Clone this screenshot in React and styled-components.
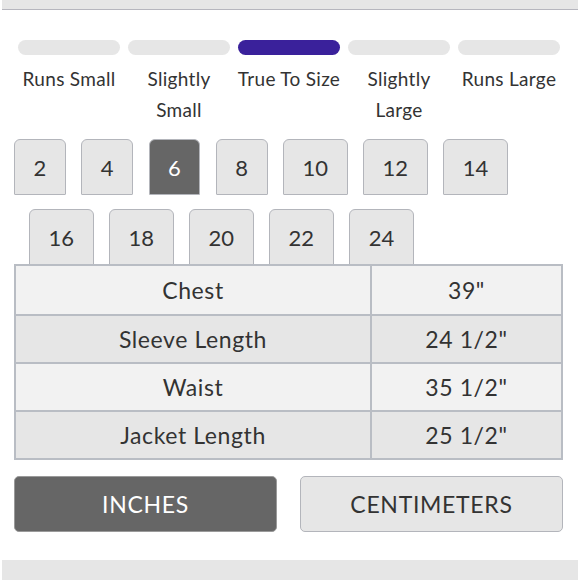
import React from "react";
import styled, { createGlobalStyle } from "styled-components";

const Global = createGlobalStyle`
  html, body { margin: 0; padding: 0; background: #fff; }
  body { font-family: Lato, "Open Sans", sans-serif; color: #333; }
`;

const Page = styled.div`
  width: 580px;
  height: 580px;
  display: flex;
  flex-direction: column;
  overflow: hidden;
`;

const Strip = styled.div`
  margin: 0 2px;
  height: ${(p) => p.$h}px;
  background: #e6e6e6;
  border-bottom: ${(p) => (p.$line ? "1.5px solid #b6b6be" : "none")};
  flex-shrink: 0;
`;

const Body = styled.div`
  padding: 0 17px 0 14px;
  flex: 1;
  display: flex;
  flex-direction: column;
`;

const Fit = styled.div`
  display: grid;
  grid-template-columns: repeat(5, 102px);
  column-gap: 8px;
  margin: 30px 0 0 4px;
`;

const FitItem = styled.div`
  display: flex;
  flex-direction: column;
  align-items: center;
  gap: 8px;
`;

const Bar = styled.div`
  width: 102px;
  height: 15px;
  border-radius: 8px;
  background: ${(p) => (p.$on ? "#3a219b" : "#e6e6e6")};
`;

const FitLabel = styled.div`
  font-size: 19px;
  letter-spacing: 0.3px;
  line-height: 31px;
  text-align: center;
  white-space: nowrap;
  color: #333;
`;

const SizeRow = styled.div`
  display: flex;
  gap: 15.5px;
  padding-left: ${(p) => p.$indent}px;
  margin-top: 14px;
`;

const SizeBtn = styled.div`
  height: 56px;
  box-sizing: border-box;
  padding: 0 18.5px;
  display: flex;
  align-items: center;
  justify-content: center;
  font-size: 22px;
  border: 1px solid #b3b5bb;
  border-radius: 6px 6px 1px 1px;
  background: ${(p) => (p.$on ? "#666666" : "#e6e6e6")};
  color: ${(p) => (p.$on ? "#fff" : "#333")};
`;

const Table = styled.div`
  margin-top: -1px;
  border: 2px solid #b9bdc4;
  display: grid;
  grid-template-columns: 354px 1fr;
`;

const Cell = styled.div`
  height: 48px;
  box-sizing: border-box;
  display: flex;
  align-items: center;
  justify-content: center;
  font-size: 23px;
  letter-spacing: 0.6px;
  color: #333;
  background: ${(p) => (p.$alt ? "#e6e6e6" : "#f2f2f2")};
  border-top: ${(p) => (p.$first ? "none" : "2px solid #b9bdc4")};
  border-left: ${(p) => (p.$right ? "2px solid #b9bdc4" : "none")};
`;

const Units = styled.div`
  display: grid;
  grid-template-columns: 1fr 1fr;
  column-gap: 23px;
  margin-top: 16px;
`;

const UnitBtn = styled.div`
  height: 56px;
  box-sizing: border-box;
  border-radius: 5px;
  display: flex;
  align-items: center;
  justify-content: center;
  font-size: 23px;
  letter-spacing: 0.7px;
  border: 1px solid ${(p) => (p.$on ? "#9a9a9a" : "#b3b5bb")};
  background: ${(p) => (p.$on ? "#666666" : "#e6e6e6")};
  color: ${(p) => (p.$on ? "#fff" : "#333")};
`;

const fits = [
  ["Runs Small"],
  ["Slightly", "Small"],
  ["True To Size"],
  ["Slightly", "Large"],
  ["Runs Large"],
];

const row1 = ["2", "4", "6", "8", "10", "12", "14"];
const row2 = ["16", "18", "20", "22", "24"];

const rows = [
  ["Chest", '39"'],
  ["Sleeve Length", '24 1/2"'],
  ["Waist", '35 1/2"'],
  ["Jacket Length", '25 1/2"'],
];

export default function App() {
  return (
    <Page>
      <Global />
      <Strip $h={9} $line />
      <Body>
        <Fit>
          {fits.map((f, i) => (
            <FitItem key={i}>
              <Bar $on={i === 2} />
              <FitLabel>
                {f.map((l, j) => (
                  <div key={j}>{l}</div>
                ))}
              </FitLabel>
            </FitItem>
          ))}
        </Fit>
        <SizeRow $indent={0}>
          {row1.map((s) => (
            <SizeBtn key={s} $on={s === "6"}>
              {s}
            </SizeBtn>
          ))}
        </SizeRow>
        <SizeRow $indent={15}>
          {row2.map((s) => (
            <SizeBtn key={s}>{s}</SizeBtn>
          ))}
        </SizeRow>
        <Table>
          {rows.map((r, i) => (
            <React.Fragment key={i}>
              <Cell $alt={i % 2 === 1} $first={i === 0}>
                {r[0]}
              </Cell>
              <Cell $alt={i % 2 === 1} $first={i === 0} $right>
                {r[1]}
              </Cell>
            </React.Fragment>
          ))}
        </Table>
        <Units>
          <UnitBtn $on>INCHES</UnitBtn>
          <UnitBtn>CENTIMETERS</UnitBtn>
        </Units>
      </Body>
      <Strip $h={20} />
    </Page>
  );
}
